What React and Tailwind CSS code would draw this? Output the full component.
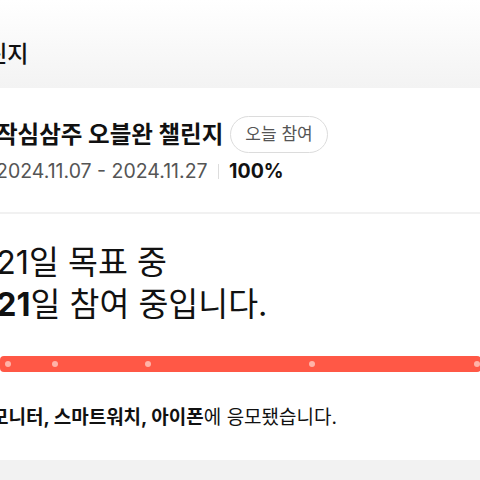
export default function App() {
  const dots = [8, 55, 148, 312, 477];

  return (
    <div
      className="w-[480px] h-[480px] overflow-hidden bg-[#f2f2f2] text-[#111]"
      style={{ fontFamily: 'Inter, "Noto Sans CJK KR", "Noto Sans", sans-serif' }}
    >
      {/* header */}
      <div className="h-[88px] bg-gradient-to-b from-white to-[#f3f3f3] flex items-end pb-[22px]">
        <h1 className="-ml-[35px] whitespace-nowrap text-[23px] font-medium leading-none">
          챌린지
        </h1>
      </div>

      {/* card */}
      <div className="bg-white h-[372px] overflow-hidden">
        <div className="-ml-[4px] pt-[28px]">
          <div className="flex items-center gap-[7px] whitespace-nowrap">
            <span className="text-[23.5px] font-bold leading-[34px]">작심삼주 오블완 챌린지</span>
            <span className="h-[37px] px-[14px] flex items-center rounded-full border-[1.5px] border-[#dcdcdc] text-[17px] text-[#555]">
              오늘 참여
            </span>
          </div>
          <div className="mt-[4px] flex items-center whitespace-nowrap text-[19.5px]">
            <span className="text-[#555]">2024.11.07 - 2024.11.27</span>
            <span className="mx-[10px] w-[1.5px] h-[15px] bg-[#dddddd]" />
            <span className="font-bold">100%</span>
          </div>
        </div>

        <div className="mt-[26px] h-[2px] bg-[#f1f1f1]" />

        <div className="-ml-[4px] pt-[28px] text-[32.5px] leading-[42px] whitespace-nowrap">
          <p>21일 목표 중</p>
          <p>
            <span className="font-bold">21</span>일 참여 중입니다.
          </p>
        </div>

        <div className="relative mt-[30px] w-[481px] h-[16px] rounded-[4px] bg-[#ff5846]">
          {dots.map((x) => (
            <span
              key={x}
              className="absolute top-[5px] w-[6px] h-[6px] rounded-full bg-[#ffb3a8]"
              style={{ left: x - 3 }}
            />
          ))}
        </div>

        <p className="-ml-[9px] mt-[32px] text-[19px] whitespace-nowrap">
          <span className="font-bold">모니터, 스마트워치, 아이폰</span>에 응모됐습니다.
        </p>
      </div>
    </div>
  );
}
